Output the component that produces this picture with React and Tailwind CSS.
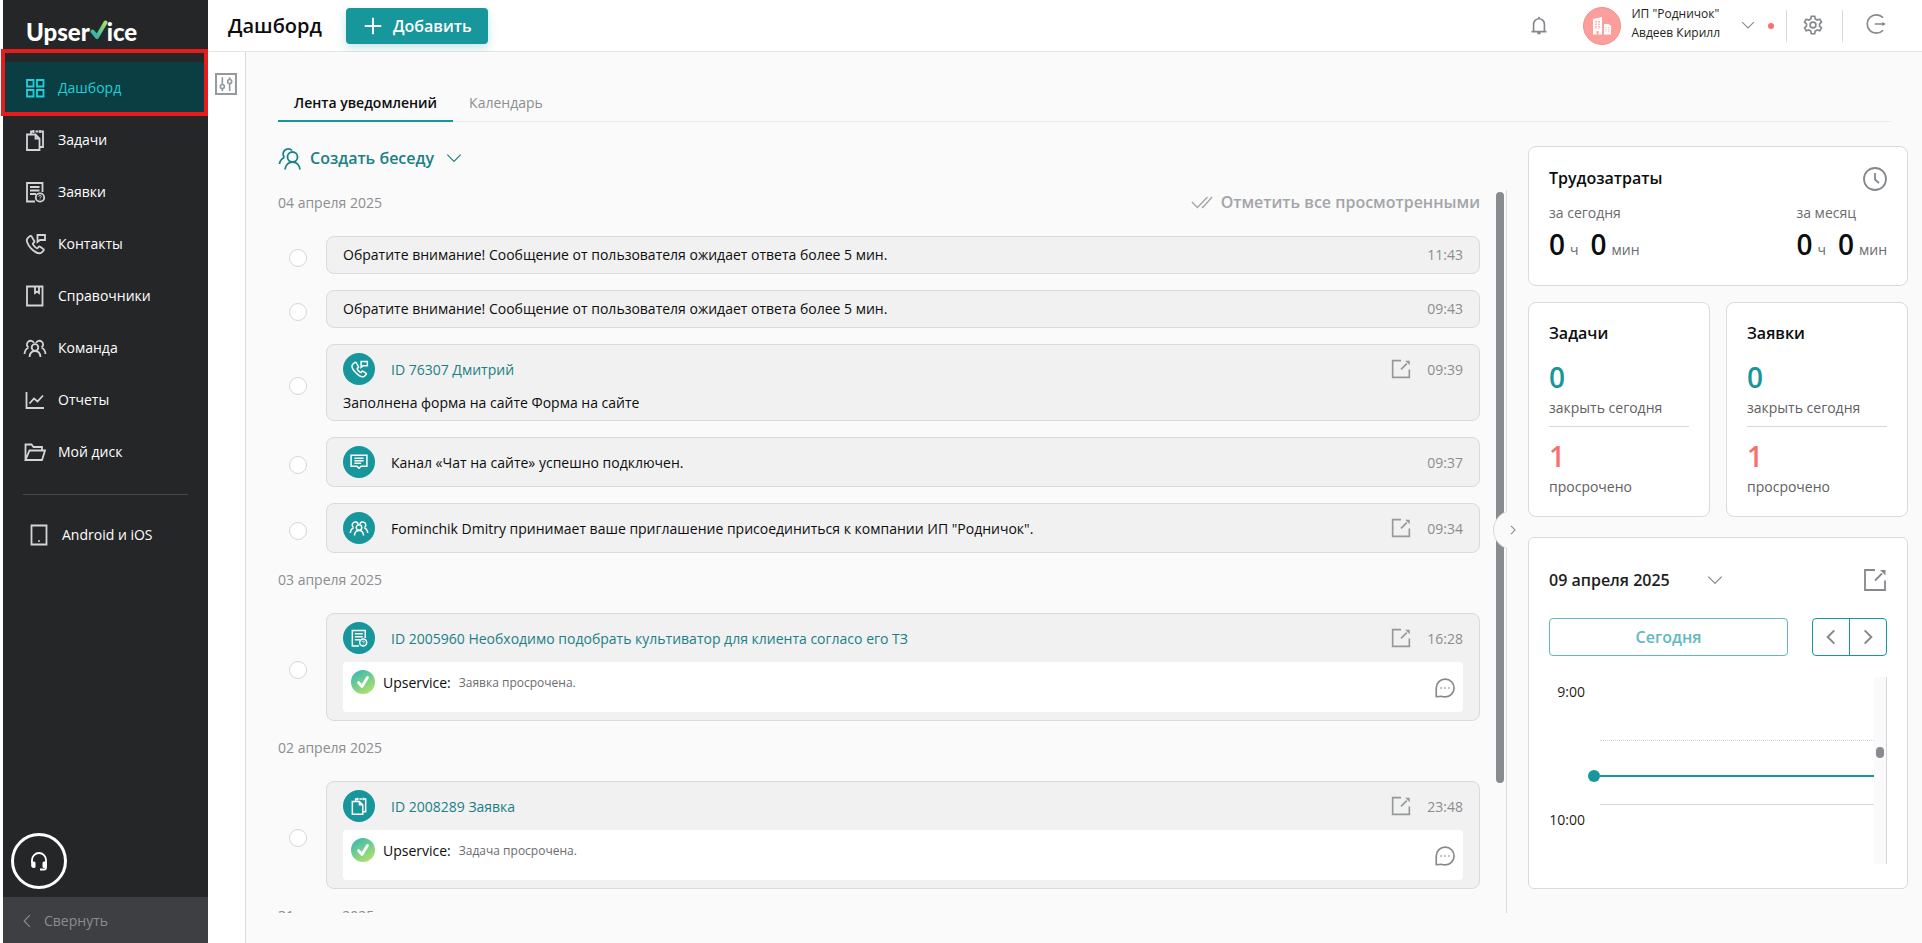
import { useState } from 'react'

const paths = {
  dashboard: <path d="M4 4h6.500v6.500H4zM14 4h6.500v6.500H14zM4 14h6.500v6.500H4zM14 14h6.500v6.500H14z" />,
  tasks: <path d="M8 6V3.500h2M18 3.500h2V19h-3M12.500 3.500h3M10.500 2v3M17 2v3M4 6.500h8.500l4 4V22H4zM12.500 6.500v4h4" />,
  requests: (
    <>
      <path d="M12 21.500H4V3h15.500v9M7 7h9.500M7 10.500h9.500M7 14h6" />
      <circle cx="17" cy="17.500" r="4.200" />
      <path d="M15.700 16.700c0-1.700 2.600-1.700 2.600 0 0 .8-1.300 1-1.300 1.800M17 19.500v.6" strokeWidth="1" />
    </>
  ),
  contacts: (
    <>
      <path d="M6.800 4.200 4.500 6.300c-1.500 1.700-.6 5.700 3.500 10s8.300 5.800 10.300 4.500l2.200-2.200c.5-.6.300-1.300-.2-1.600l-3.200-2.200c-.6-.4-1.200-.3-1.600.2l-1 1.300c-1 .2-4.800-3.300-4.700-4.800l1.300-1.100c.5-.4.500-1 .1-1.500L8.600 4.400c-.5-.6-1.200-.7-1.800-.2z" />
      <path d="M14.500 10V3h7.500v5h-5z" />
    </>
  ),
  book: <path d="M4 2.500h15.500v19H4zM12 2.500V9l2-1.500L16 9V2.500" />,
  team: (
    <>
      <circle cx="12" cy="11.500" r="3.300" />
      <path d="M6.500 21c.3-3.700 2.400-6 5.500-6s5.200 2.300 5.500 6M5.500 11.500a3.700 3.700 0 1 1 5.500-4.500M18.500 11.500a3.700 3.700 0 1 0-5.500-4.500M1.500 18c.2-3 1.500-5.200 4-6.500M22.500 18c-.2-3-1.500-5.200-4-6.500" />
    </>
  ),
  reports: <path d="M3.500 4v16H21M6.500 15.500l4.500-5 3.500 3L20 7.500" />,
  disk: <path d="M2.500 20V4.500h6l2 2.500H19v3.500M2.500 20l4-9.500h15.500L19 20z" />,
  tablet: <path d="M4.500 2.500h15v19h-15zM11.300 18h1.400" />,
  chat: <path d="M2.500 4h19v13h-7L12 19.500 9.500 17h-7zM6.500 7.500h11M6.500 10.500h11M6.500 13.500h8" />,
  people: (
    <>
      <circle cx="14.500" cy="11" r="5" />
      <path d="M7 23.500c.5-4.500 3.500-7.500 7.500-7.500s7 3 7.500 7.500M6.500 11.500a4.500 4.500 0 1 1 7.500-7M1.500 18c.3-3.500 2-5 4.500-6.500" />
    </>
  ),
  clock: (
    <>
      <circle cx="12" cy="12" r="11" />
      <path d="M12 6v6.500l4 3.500" />
    </>
  ),
  external: (
    <>
      <path d="M12 2H2v20H22V12.500M12 12.500l7-7" />
      <path d="M17 2h5.500v5.500z" fill="currentColor" stroke="none" />
    </>
  ),
  bell: <path d="M3 20h18M5.500 20v-9a6.500 6.500 0 0 1 13 0v9M12 4.500V2M10 22h4" />,
  gear: (
    <>
      <circle cx="12" cy="12" r="3.500" />
      <path d="M10 1.500h4l.7 3.200 2.400 1.400 3.100-1 2 3.500L19.800 10.700v2.600l2.400 2.100-2 3.500-3.100-1-2.400 1.400-.7 3.200h-4l-.7-3.200-2.400-1.400-3.100 1-2-3.500 2.400-2.100v-2.600L1.800 8.600l2-3.500 3.100 1 2.400-1.400z" />
    </>
  ),
  logout: (
    <>
      <path d="M20.500 4.500a11 11 0 1 0 0 15M10.500 12H21" />
      <path d="M19.500 9.500l4.500 2.500-4.500 2.500z" fill="currentColor" stroke="none" />
    </>
  ),
  sliders: (
    <>
      <path d="M1 1h22v22H1z" strokeWidth="2.500" />
      <path d="M8 4.500v8M8 17v2.500M16 4.500V7M16 11.500v8" />
      <circle cx="8" cy="14.700" r="2.200" />
      <circle cx="16" cy="9.300" r="2.200" />
    </>
  ),
  comment: (
    <>
      <path d="M1.500 22.500V12a10.700 10.700 0 1 1 10.500 10.700c-2.500 0-4-.7-4.800-.7C6.500 22.300 4 22.500 1.500 22.500z" />
      <path d="M6.500 12h1.600M11.200 12h1.600M15.900 12h1.600" strokeWidth="2" />
    </>
  ),
  chevronDown: <path d="M2 7l10 10L22 7" />,
  chevronLeft: <path d="M17 2 7 12l10 10" />,
  chevronRight: <path d="M7 2l10 10L7 22" />,
  doubleCheck: <path d="M1 12l6 6L18 6.500M12 17l1 1L23 6.500" />,
  plus: <path d="M12 1v22M1 12h22" />,
}

function Icon({ name, className, stroke = 1.8 }) {
  return (
    <svg viewBox="0 0 24 24" fill="none" stroke="currentColor" strokeWidth={stroke} className={`shrink-0 ${className}`} aria-hidden="true">
      {paths[name]}
    </svg>
  )
}

const menu = [
  { icon: 'dashboard', label: 'Дашборд' },
  { icon: 'tasks', label: 'Задачи' },
  { icon: 'requests', label: 'Заявки' },
  { icon: 'contacts', label: 'Контакты' },
  { icon: 'book', label: 'Справочники' },
  { icon: 'team', label: 'Команда' },
  { icon: 'reports', label: 'Отчеты' },
  { icon: 'disk', label: 'Мой диск' },
]

const feed = [
  {
    date: '04 апреля 2025',
    items: [
      { text: 'Обратите внимание! Сообщение от пользователя ожидает ответа более 5 мин.', time: '11:43' },
      { text: 'Обратите внимание! Сообщение от пользователя ожидает ответа более 5 мин.', time: '09:43' },
      { icon: 'contacts', link: 'ID 76307 Дмитрий', note: 'Заполнена форма на сайте Форма на сайте', time: '09:39', external: true },
      { icon: 'chat', text: 'Канал «Чат на сайте» успешно подключен.', time: '09:37' },
      { icon: 'team', text: 'Fominchik Dmitry принимает ваше приглашение присоединиться к компании ИП "Родничок".', time: '09:34', external: true },
    ],
  },
  {
    date: '03 апреля 2025',
    items: [
      { icon: 'requests', link: 'ID 2005960 Необходимо подобрать культиватор для клиента согласо его ТЗ', comment: 'Заявка просрочена.', time: '16:28', external: true },
    ],
  },
  {
    date: '02 апреля 2025',
    items: [
      { icon: 'tasks', link: 'ID 2008289 Заявка', comment: 'Задача просрочена.', time: '23:48', external: true },
    ],
  },
  { date: '31 марта 2025', items: [] },
]

function Logo() {
  return (
    <a href="#" aria-label="Upservice" className="flex h-[62px] items-center pt-0.5 pl-[23px] font-['Lato'] text-2xl font-black text-white">
      <span>Upser</span>
      <svg viewBox="0 0 18 20" className="-mt-1 -mr-px h-5 w-[18px]" aria-hidden="true">
        <defs>
          <linearGradient id="tick" x1="0" y1="1" x2="1" y2="0">
            <stop offset="0.2" stopColor="#35b8a8" />
            <stop offset="1" stopColor="#a8e063" />
          </linearGradient>
        </defs>
        <path d="M2.500 11.500 7 17 15.500 2.500" fill="none" stroke="url(#tick)" strokeWidth="4" strokeLinecap="round" strokeLinejoin="round" />
      </svg>
      <span>ice</span>
    </a>
  )
}

function Sidebar() {
  return (
    <aside className="relative ml-[3px] flex w-[205px] shrink-0 flex-col bg-[#252628] text-sm text-white">
      <Logo />
      <nav>
        {menu.map((m, i) => (
          <a
            key={m.label}
            href="#"
            aria-current={i === 0 ? 'page' : undefined}
            className={`flex h-13 items-center gap-[11px] pl-5 ${i === 0 ? 'bg-[#0b3e42] text-[#1fd0d9]' : ''}`}
          >
            <Icon name={m.icon} className={`size-6 ${i === 0 ? '' : 'text-[#d5d5d6]'}`} />
            {m.label}
          </a>
        ))}
      </nav>
      {/* Highlight frame around the active item */}
      <div className="pointer-events-none absolute top-[49px] -left-0.5 h-[67px] w-[207px] border-4 border-[#e61c1c]" />
      <div className="mx-5 mt-4 border-t border-[#47484b]" />
      <a href="#" className="mt-4 flex h-12 items-center gap-[11px] pl-6">
        <Icon name="tablet" className="size-6 text-[#d5d5d6]" />
        Android и iOS
      </a>
      <button type="button" aria-label="Поддержка" className="mt-auto mb-2 ml-2 flex size-14 items-center justify-center rounded-full border-3 border-white">
        <svg viewBox="0 0 20 20" className="size-5" aria-hidden="true">
          <path d="M3 12V9a7 7 0 0 1 14 0v8c0 1-.6 1.500-1.500 1.500H11" fill="none" stroke="white" strokeWidth="1.800" />
          <path d="M2.200 10.500H5q1.500 0 1.500 1.500v3.500Q6.500 17 5 17T2.200 15.500zM17.800 10.500H15q-1.500 0-1.500 1.500v3.500q0 1.500 1.500 1.500t2.800-1.500z" fill="white" />
        </svg>
      </button>
      <button type="button" className="flex h-[46px] shrink-0 items-center gap-2.5 bg-[#3e3f43] pt-0.5 pl-[17px] text-[#8b8c8f]">
        <Icon name="chevronLeft" className="size-3.5" stroke={2} />
        Свернуть
      </button>
    </aside>
  )
}

function Header() {
  return (
    <header className="flex h-13 shrink-0 items-center border-b border-[#e5e5e6] bg-white pr-9 pl-5">
      <h1 className="text-xl leading-6 font-semibold">Дашборд</h1>
      <button type="button" className="ml-6 flex h-9 items-center gap-[11px] rounded-sm bg-[#17969c] pr-4 pl-[18px] font-semibold text-white shadow-[0_4px_10px_rgba(23,150,156,0.25)]">
        <Icon name="plus" className="size-[18px]" stroke={2.5} />
        Добавить
      </button>
      <div className="ml-auto flex items-center text-[#85888c]">
        <button type="button" aria-label="Уведомления" className="mb-0.5">
          <Icon name="bell" className="size-5" stroke={2} />
        </button>
        <button type="button" className="ml-[34px] flex items-center text-left">
          <span className="flex size-[38px] items-center justify-center rounded-full border border-[#f08f8d] bg-[#fc9f9c]">
            <svg viewBox="0 0 18 18" className="size-[18px]" aria-hidden="true">
              <path d="M0 17.500V2L9 0v17.500zM11 17.500V7h4.500L18 9v8.500z" fill="white" />
              <path d="M3 4v8M6 4v8" stroke="#fc9f9c" strokeWidth="1.500" strokeDasharray="1.500 1" />
              <path d="M13 10v5M15.800 10v5" stroke="#fc9f9c" strokeWidth="1" strokeDasharray="1.200 1" />
              <path d="M4.500 14v3.500" stroke="#fc9f9c" strokeWidth="2" />
            </svg>
          </span>
          <span className="mb-1.5 ml-2.5 text-xs leading-[19px] text-[#1d1e20]">
            ИП "Родничок"
            <br />
            Авдеев Кирилл
          </span>
          <Icon name="chevronDown" className="mb-0.5 ml-[21px] size-3.5" />
          <span className="ml-[13px] size-1.5 rounded-full bg-[#fa6e6c]" />
        </button>
        <span className="ml-3 h-8 w-px bg-[#d9d9db]" />
        <button type="button" aria-label="Настройки" className="mb-0.5 ml-4">
          <Icon name="gear" className="size-5" stroke={2} />
        </button>
        <span className="ml-[19px] h-8 w-px bg-[#d9d9db]" />
        <button type="button" aria-label="Выйти" className="mb-1 ml-[23px]">
          <Icon name="logout" className="size-5" stroke={2} />
        </button>
      </div>
    </header>
  )
}

function Comment({ text }) {
  return (
    <div className="mt-2 flex h-[50px] items-center rounded-sm bg-white px-2">
      <svg viewBox="0 0 24 24" className="mb-2.5 size-6" aria-hidden="true">
        <defs>
          <linearGradient id="avatar" x1="0.2" y1="0" x2="0.8" y2="1">
            <stop offset="0.1" stopColor="#45bdab" />
            <stop offset="1" stopColor="#b4e368" />
          </linearGradient>
        </defs>
        <circle cx="12" cy="12" r="12" fill="url(#avatar)" />
        <path d="M7.500 12.500 11 16.500l5.500-9" fill="none" stroke="white" strokeWidth="2.800" strokeLinecap="round" strokeLinejoin="round" />
      </svg>
      <span className="mb-2 ml-2">Upservice:</span>
      <span className="mb-2 ml-2 text-xs text-[#6c6d70]">{text}</span>
      <button type="button" aria-label="Ответить" className="mt-0.5 ml-auto text-[#85888c]">
        <Icon name="comment" className="size-5" stroke={2} />
      </button>
    </div>
  )
}

function FeedItem({ item }) {
  return (
    <li className="flex items-center">
      <input
        type="checkbox"
        aria-label={item.link || item.text}
        className="mt-1.5 mr-[19px] ml-[11px] size-[18px] shrink-0 appearance-none rounded-full border border-[#d5d6d7] bg-white checked:bg-[#17969c]"
      />
      <article className="min-w-0 flex-1 rounded-lg border border-[#d9dadb] bg-[#f1f1f1] px-4 py-2">
        <div className="flex items-center">
          {item.icon && (
            <span className="mr-4 flex size-8 items-center justify-center rounded-full bg-[#17969c] text-white">
              <Icon name={item.icon} className="size-5" />
            </span>
          )}
          {item.link ? <a href="#" className="pt-0.5 text-[#1a8085]">{item.link}</a> : <p className={item.icon ? 'pt-0.5' : ''}>{item.text}</p>}
          {item.external && (
            <button type="button" aria-label="Открыть" className="ml-auto text-[#96999b]">
              <Icon name="external" className="size-5" stroke={2} />
            </button>
          )}
          <time className={`text-[#8b8d90] ${item.external ? 'ml-4' : 'ml-auto'} ${item.icon ? 'pt-0.5' : ''}`}>{item.time}</time>
        </div>
        {item.note && <p className="mt-2 leading-[19px]">{item.note}</p>}
        {item.comment && <Comment text={item.comment} />}
      </article>
    </li>
  )
}

function Feed() {
  return (
    <div className="flex min-h-0 flex-1">
      <div className="min-w-0 flex-1 overflow-hidden pt-[3px] text-sm">
        {feed.map((group, i) => (
          <section key={group.date} className="mb-[17px]">
            <div className="mb-[23px] flex h-5 items-center justify-between">
              <h2 className="text-[#8b8d90]">{group.date}</h2>
              {i === 0 && (
                <button type="button" className="flex items-center gap-2 pb-0.5 text-base font-semibold text-[#a3a5a8]">
                  <Icon name="doubleCheck" className="size-[22px]" stroke={1.5} />
                  Отметить все просмотренными
                </button>
              )}
            </div>
            <ul className="space-y-4">
              {group.items.map(item => <FeedItem key={item.time} item={item} />)}
            </ul>
          </section>
        ))}
      </div>
      <div className="ml-4 w-2.5 pt-0.5">
        <div className="h-[82%] w-2 rounded-full bg-[#888b8f]" />
      </div>
    </div>
  )
}

function Hours({ label }) {
  return (
    <div>
      <p className="mb-[3px] text-sm text-[#6a6b6e]">{label}</p>
      <p className="flex items-baseline text-[28px] leading-9 font-semibold">
        0<span className="ml-[5px] text-sm font-normal text-[#6a6b6e]">ч</span>
        <span className="ml-3">0</span>
        <span className="ml-[5px] text-sm font-normal text-[#6a6b6e]">мин</span>
      </p>
    </div>
  )
}

function Counter({ title }) {
  return (
    <section className="flex-1 rounded-lg border border-[#d9dadb] bg-white px-5 py-[18px]">
      <h2 className="font-semibold">{title}</h2>
      <p className="mt-3 text-[28px] leading-10 font-semibold text-[#17969c]">0</p>
      <p className="mt-px text-sm text-[#5f6063]">закрыть сегодня</p>
      <p className="mt-2 border-t border-[#d5d6d7] pt-[9px] text-[28px] leading-10 font-semibold text-[#fa6e6c]">1</p>
      <p className="mt-px pb-px text-sm text-[#5f6063]">просрочено</p>
    </section>
  )
}

function DayPlan() {
  return (
    <section className="rounded-md border border-[#d9dadb] bg-white px-5 pt-[30px] pb-6">
      <div className="flex items-center">
        <button type="button" className="flex items-center gap-[37px] font-semibold text-[#1d1e20]">
          09 апреля 2025
          <Icon name="chevronDown" className="size-4 text-[#85888c]" />
        </button>
        <button type="button" aria-label="Открыть календарь" className="ml-auto text-[#85888c]">
          <Icon name="external" className="size-6" />
        </button>
      </div>
      <div className="mt-[26px] flex gap-6">
        <button type="button" className="h-[38px] flex-1 rounded-sm border border-[#62b9bb] font-semibold text-[#62b9bb]">Сегодня</button>
        <div className="flex h-[38px] w-[75px] divide-x divide-[#17969c] rounded-sm border border-[#17969c] text-[#85888c]">
          <button type="button" aria-label="Назад" className="flex flex-1 items-center justify-center">
            <Icon name="chevronLeft" className="size-4" stroke={3} />
          </button>
          <button type="button" aria-label="Вперёд" className="flex flex-1 items-center justify-center">
            <Icon name="chevronRight" className="size-4" stroke={3} />
          </button>
        </div>
      </div>
      <div className="mt-[21px] flex h-[187px] text-sm text-[#1d1e20]">
        <div className="w-9 pt-[5px] text-right">
          <p>9:00</p>
          <p className="mt-27">10:00</p>
        </div>
        <div className="relative ml-[15px] flex-1">
          <div className="h-16 border-b border-dotted border-[#d2d3d4]" />
          <div className="h-16 border-b border-[#d5d6d7]" />
          {/* Current time marker */}
          <div className="absolute top-[98px] right-0 left-0 h-0.5 bg-[#17969c]" />
          <div className="absolute top-[93px] -left-3 size-3 rounded-full bg-[#17969c]" />
        </div>
        <div className="w-[13px] border-r border-[#d5d6d7] bg-[#fafafa] pt-[70px] pl-0.5">
          <div className="h-[11px] w-2 rounded-full bg-[#888b8f]" />
        </div>
      </div>
    </section>
  )
}

function Widgets() {
  return (
    <aside className="relative w-[402px] shrink-0 border-l border-[#d9dadb] pl-[21px]">
      <button type="button" aria-label="Скрыть панель" className="absolute top-80 -left-3.5 flex h-10 w-[26px] items-center text-[#85888c]">
        <span className="h-10 w-3.5 overflow-hidden">
          <span className="block size-10 rounded-full border border-[#d9dadb] bg-[#fafafa]" />
        </span>
        <span className="h-9 w-px shrink-0 bg-[#fafafa]" />
        <Icon name="chevronRight" className="size-2.5" stroke={2.500} />
      </button>
      <div className="-mt-11 space-y-4">
        <section className="rounded-lg border border-[#d9dadb] bg-white px-5 pt-5 pb-[23px]">
          <div className="flex h-6 items-center justify-between">
            <h2 className="pb-0.5 font-semibold">Трудозатраты</h2>
            <Icon name="clock" className="size-6 text-[#85888c]" />
          </div>
          <div className="mt-3 flex justify-between">
            <Hours label="за сегодня" />
            <Hours label="за месяц" />
          </div>
        </section>
        <div className="flex gap-4 pb-1">
          <Counter title="Задачи" />
          <Counter title="Заявки" />
        </div>
        <DayPlan />
      </div>
    </aside>
  )
}

export default function App() {
  const [tab, setTab] = useState(0)

  return (
    <div className="flex h-screen overflow-hidden bg-white font-['Open_Sans','Noto_Sans',sans-serif] text-base text-[#0c0d0e]">
      <Sidebar />
      <div className="flex min-w-0 flex-1 flex-col">
        <Header />
        <div className="flex min-h-0 flex-1">
          <div className="w-[38px] shrink-0 border-r border-[#d9dadb] pt-[21px] pl-[7px]">
            <button type="button" aria-label="Фильтры" className="block text-[#96999d]">
              <Icon name="sliders" className="size-[22px]" />
            </button>
          </div>
          <main className="flex min-w-0 flex-1 flex-col bg-[#fafafa] pt-8 pr-3.5 pb-[30px] pl-8">
            <div role="tablist" className="mr-[17px] flex h-[38px] border-b border-[#ececed] text-sm">
              {['Лента уведомлений', 'Календарь'].map((label, i) => (
                <button
                  key={label}
                  type="button"
                  role="tab"
                  aria-selected={tab === i}
                  onClick={() => setTab(i)}
                  className={`-mb-px border-b-2 px-4 pt-0.5 ${tab === i ? 'border-[#17969c] font-semibold' : 'border-transparent text-[#8b8d90]'}`}
                >
                  {label}
                </button>
              ))}
            </div>
            <button type="button" className="mt-[22px] flex h-7 items-center self-start font-semibold text-[#1a8085]">
              <Icon name="people" className="mr-2 size-6" />
              Создать беседу
              <Icon name="chevronDown" className="ml-3 size-4" />
            </button>
            <div className="mt-[18px] flex min-h-0 flex-1">
              <Feed />
              <Widgets />
            </div>
          </main>
        </div>
      </div>
    </div>
  )
}
